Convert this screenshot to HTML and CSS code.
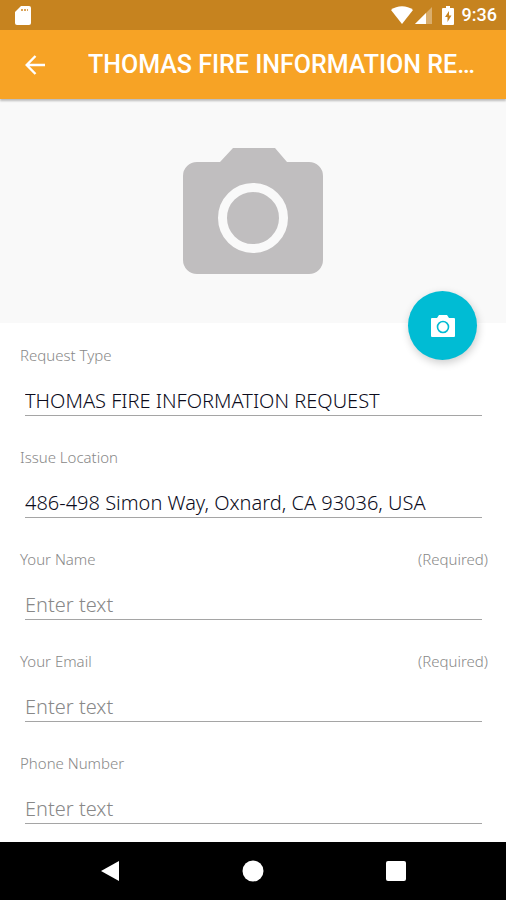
FILE: index.html
```
<!DOCTYPE html>
<html lang="en">
<head>
    <meta charset="UTF-8">
    <meta name="viewport" content="width=device-width, initial-scale=1.0">
    <title>Information Request</title>
    <link rel="stylesheet" href="styles.css">
</head>
<body>
    <div class="status-bar">
        <svg class="sd-icon" width="16" height="19" viewBox="0 0 16 19">
            <path fill="#fff" d="M6 0h8a2 2 0 0 1 2 2v15a2 2 0 0 1-2 2H2a2 2 0 0 1-2-2V6z"/>
            <path fill="#d9a45c" d="M6 3h2v2H6zM9 3h2v2H9zM12 3h1v2h-1z"/>
        </svg>
        <div class="status-icons">
            <svg width="22" height="18" viewBox="0 0 22 18">
                <path fill="#fff" d="M0 4C6-1 16-1 22 4L11 18z"/>
            </svg>
            <svg class="signal-icon" width="17" height="17" viewBox="0 0 17 17">
                <path fill="#fff" fill-opacity=".35" d="M17 0v17H0z"/>
                <path fill="#fff" d="M11 6v11H0z"/>
            </svg>
            <svg class="battery-icon" width="12" height="19" viewBox="0 0 12 19">
                <path fill="#fff" d="M4 0h4v2h3a1 1 0 0 1 1 1v15a1 1 0 0 1-1 1H1a1 1 0 0 1-1-1V3a1 1 0 0 1 1-1h3z"/>
                <path fill="#c6831f" d="M7 5L3 11h2.500v5L9.500 9.500H7z"/>
            </svg>
            <span class="clock">9:36</span>
        </div>
    </div>

    <header class="app-bar">
        <button class="back-button" type="button" aria-label="Back">
            <svg width="20" height="20" viewBox="0 0 20 20" fill="none" stroke="#fff" stroke-width="2.400">
                <path d="M20 10H2M10.500 1L1.700 10l8.800 9"/>
            </svg>
        </button>
        <h1>THOMAS FIRE INFORMATION REQUEST</h1>
    </header>

    <main>
        <section class="photo">
            <svg width="140" height="126" viewBox="0 0 140 126">
                <path fill="#c0bebf" d="M50 0h42l12 14h22a14 14 0 0 1 14 14v84a14 14 0 0 1-14 14H14a14 14 0 0 1-14-14V28a14 14 0 0 1 14-14h23z"/>
                <circle cx="70" cy="70" r="30.500" fill="none" stroke="#f9f9f9" stroke-width="9"/>
            </svg>
            <button class="fab" type="button" aria-label="Add photo">
                <svg width="24" height="22" viewBox="0 0 24 22">
                    <path fill="#fff" d="M8 0h8l2 3h5a1 1 0 0 1 1 1v17a1 1 0 0 1-1 1H1a1 1 0 0 1-1-1V4a1 1 0 0 1 1-1h5z"/>
                    <circle cx="12" cy="12" r="5.500" fill="none" stroke="#00bcd4" stroke-width="1.600"/>
                </svg>
            </button>
        </section>

        <form class="request-form">
            <div class="field">
                <div class="field-head"><label for="type">Request Type</label></div>
                <input id="type" type="text" value="THOMAS FIRE INFORMATION REQUEST">
            </div>
            <div class="field">
                <div class="field-head"><label for="location">Issue Location</label></div>
                <input id="location" type="text" value="486-498 Simon Way, Oxnard, CA 93036, USA">
            </div>
            <div class="field">
                <div class="field-head"><label for="name">Your Name</label><span>(Required)</span></div>
                <input id="name" type="text" placeholder="Enter text">
            </div>
            <div class="field">
                <div class="field-head"><label for="email">Your Email</label><span>(Required)</span></div>
                <input id="email" type="email" placeholder="Enter text">
            </div>
            <div class="field">
                <div class="field-head"><label for="phone">Phone Number</label></div>
                <input id="phone" type="tel" placeholder="Enter text">
            </div>
        </form>
    </main>

    <nav class="nav-bar">
        <button type="button" aria-label="Back">
            <svg width="22" height="22" viewBox="0 0 22 22"><path fill="#fff" d="M20 1v20L2 11z"/></svg>
        </button>
        <button type="button" aria-label="Home">
            <svg width="22" height="22" viewBox="0 0 22 22"><circle cx="11" cy="11" r="10.500" fill="#fff"/></svg>
        </button>
        <button type="button" aria-label="Recent apps">
            <svg width="22" height="22" viewBox="0 0 22 22"><rect x="1" y="1" width="20" height="20" rx="2" fill="#fff"/></svg>
        </button>
    </nav>
</body>
</html>
```
FILE: styles.css
```
* {
    box-sizing: border-box;
}

body {
    margin: 0;
    min-height: 100vh;
    display: flex;
    flex-direction: column;
    background: #fff;
    font-family: "Noto Sans", "Open Sans", sans-serif;
}

button {
    display: flex;
    align-items: center;
    justify-content: center;
    padding: 0;
    border: none;
    background: none;
    cursor: pointer;
}

svg {
    display: block;
}

/* Status bar */
.status-bar {
    display: flex;
    align-items: center;
    justify-content: space-between;
    height: 30px;
    padding: 0 9px 0 15px;
    background: #c6831f;
}

.status-icons {
    display: flex;
    align-items: center;
    color: #fff;
    font-family: Roboto, sans-serif;
    font-size: 18px;
    font-weight: 500;
}

.signal-icon {
    margin-left: 2px;
}

.battery-icon {
    margin: 0 8px 0 10px;
}

.clock {
    line-height: 30px;
}

/* App bar */
.app-bar {
    position: relative;
    z-index: 1;
    display: flex;
    align-items: center;
    height: 69px;
    padding-right: 28px;
    background: #f7a325;
    box-shadow: 0 2px 2px rgba(0, 0, 0, 0.25);
}

.back-button {
    flex: none;
    width: 70px;
    height: 69px;
    margin-right: 18px;
}

.app-bar h1 {
    margin: 0;
    color: #fff;
    font-family: Roboto, sans-serif;
    font-size: 25px;
    font-weight: 500;
    line-height: 34px;
    white-space: nowrap;
    overflow: hidden;
    text-overflow: ellipsis;
}

main {
    flex: 1;
}

/* Photo */
.photo {
    position: relative;
    display: flex;
    align-items: center;
    justify-content: center;
    height: 224px;
    background: #f9f9f9;
}

/* Floats over the edge between the photo and the form */
.fab {
    position: absolute;
    right: 29px;
    bottom: -37px;
    width: 69px;
    height: 69px;
    border-radius: 50%;
    background: #00bcd4;
    box-shadow: 1px 3px 8px rgba(0, 0, 0, 0.2);
}

/* Form */
.request-form {
    display: flex;
    flex-direction: column;
    gap: 31px;
    padding: 22px 18px 17px 20px;
}

.field-head {
    display: flex;
    justify-content: space-between;
    margin-bottom: 21px;
    color: #888;
    font-size: 15px;
    font-weight: 300;
    line-height: 20px;
}

.field {
    display: flex;
    flex-direction: column;
}

.field input {
    height: 30px;
    margin: 0 6px 0 5px;
    padding: 0 0 1px;
    border: none;
    border-bottom: 1px solid #a5a5a5;
    border-radius: 0;
    outline: none;
    background: none;
    color: #0c0c1c;
    font-family: inherit;
    font-size: 20px;
    font-weight: 300;
}

.field input::placeholder {
    color: #888;
}

/* Navigation bar */
.nav-bar {
    display: flex;
    align-items: center;
    justify-content: center;
    gap: 83px;
    height: 58px;
    background: #000;
}

.nav-bar button {
    width: 60px;
    height: 58px;
}
```
